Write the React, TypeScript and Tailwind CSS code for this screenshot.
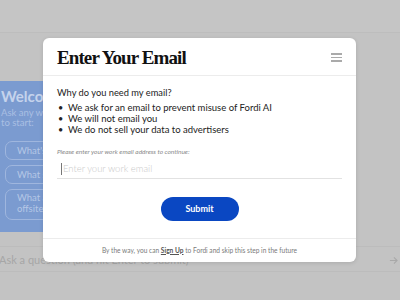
import React from "react";

const lato = { fontFamily: "Lato, 'Noto Sans', sans-serif" };

export default function App() {
  return (
    <div
      className="relative w-[400px] h-[300px] overflow-hidden bg-[#c3c3c3]"
      style={lato}
    >
      {/* background page */}
      <div className="flex flex-col h-full">
        <div className="h-[33px] bg-[#c5c5c5] border-b border-[#bdbdbd]" />
        <div className="pt-[48px]">
          <div className="-ml-[12px] w-[300px] h-[151px] bg-[#7b9bd0] rounded-br-[6px] pl-[13px] pt-[5px] flex flex-col">
            <div className="text-[15px] font-bold leading-[20px] text-[#c5d3ec]">Welcome</div>
            <div className="text-[9.5px] leading-[10px] text-[#aabfe3] mt-[2px]">
              Ask any work question
              <br />
              to start:
            </div>
            <div className="mt-[13px] ml-[4px] flex flex-col gap-[5px] w-[200px]">
              <div className="h-[19px] rounded-[7px] border border-[#9fb6de] pl-[11px] text-[9.5px] leading-[17px] text-[#b5c7e6]">
                What's a good way to
              </div>
              <div className="h-[19px] rounded-[7px] border border-[#9fb6de] pl-[11px] text-[9.5px] leading-[17px] text-[#b5c7e6]">
                What should I do about
              </div>
              <div className="h-[31px] rounded-[7px] border border-[#9fb6de] pl-[11px] pt-[2px] text-[9.5px] leading-[11px] text-[#b5c7e6]">
                What are some ideas for
                <br />
                offsite?
              </div>
            </div>
          </div>
        </div>
        <div className="mt-[14px] h-[26px] border-t border-b border-[#bcbcbc] flex items-center justify-between pr-[2px] pt-[2px]">
          <span className="text-[11px] text-[#a6a6a6] -ml-[1px]">
            Ask a question (and hit Enter to submit)
          </span>
          <svg width="9" height="9" viewBox="0 0 10 10" fill="none" stroke="#a8a8a8" strokeWidth="1.2">
            <path d="M1 5h8M5.5 1.5L9 5l-3.5 3.5" />
          </svg>
        </div>
      </div>

      {/* modal */}
      <div className="absolute left-[43px] top-[38px] w-[313px] h-[224px] bg-white rounded-[6px] shadow-[0_1px_4px_rgba(0,0,0,0.12)] flex flex-col">
        <div className="h-[38px] shrink-0 border-b border-[#ececec] flex items-center justify-between pl-[14px] pr-[14px]">
          <span
            className="text-[19px] font-bold text-[#111] tracking-[-0.9px] leading-none mt-[2px]"
            style={{ fontFamily: "'Liberation Serif', 'DejaVu Serif', serif" }}
          >
            Enter Your Email
          </span>
          <div className="flex flex-col gap-[2px] mt-[2px]">
            <div className="w-[11px] h-[1.5px] bg-[#aaaaaa]" />
            <div className="w-[11px] h-[1.5px] bg-[#aaaaaa]" />
            <div className="w-[11px] h-[1.5px] bg-[#aaaaaa]" />
          </div>
        </div>
        <div className="flex-1 px-[14px] pt-[11px] flex flex-col">
          <div className="text-[9.3px] leading-[12px] text-[#222]">Why do you need my email?</div>
          <ul className="mt-[3px] text-[9.5px] text-[#222] flex flex-col">
            <li className="flex items-center h-[11px] leading-[11px] overflow-visible">
              <span className="w-[11px] pl-[1px] text-[9px] leading-[11px]">•</span>
              <span>We ask for an email to prevent misuse of Fordi AI</span>
            </li>
            <li className="flex items-center h-[11px] leading-[11px] overflow-visible">
              <span className="w-[11px] pl-[1px] text-[9px] leading-[11px]">•</span>
              <span>We will not email you</span>
            </li>
            <li className="flex items-center h-[11px] leading-[11px] overflow-visible">
              <span className="w-[11px] pl-[1px] text-[9px] leading-[11px]">•</span>
              <span>We do not sell your data to advertisers</span>
            </li>
          </ul>
          <div className="mt-[12px] text-[6.5px] leading-[10px] italic text-[#8a8a8a]">
            Please enter your work email address to continue:
          </div>
          <div className="mt-[1px] h-[21px] pt-[2px] border-b border-[#e2e2e2] flex items-center">
            <div className="w-[1px] h-[12px] bg-[#777] ml-[4px] mr-[1px]" />
            <span className="text-[9.5px] text-[#c9c9c9] font-light">Enter your work email</span>
          </div>
          <div className="mt-[18px] flex justify-center">
            <div className="w-[78px] h-[24px] rounded-full bg-[#0a47c2] text-white text-[9px] font-bold flex items-center justify-center">
              Submit
            </div>
          </div>
        </div>
        <div className="h-[24px] shrink-0 border-t border-[#ececec] flex items-center justify-center text-[6.6px] text-[#7a7a7a]">
          <span>
            By the way, you can{" "}
            <span className="underline font-bold text-[#555]">Sign Up</span> to Fordi and skip this step in the future
          </span>
        </div>
      </div>
    </div>
  );
}
